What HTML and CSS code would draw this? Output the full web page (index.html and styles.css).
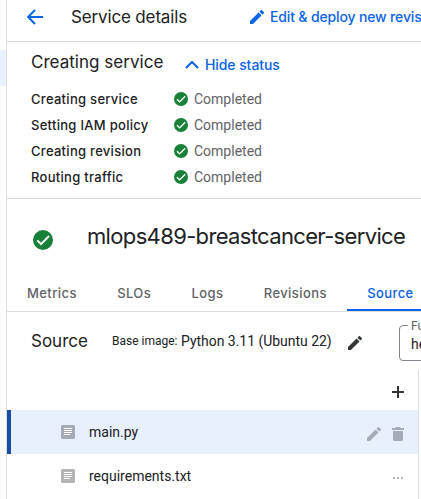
FILE: index.html
```html
<!DOCTYPE html>
<html lang="en">
<head>
<meta charset="utf-8">
<title>Service details</title>
<link rel="stylesheet" href="styles.css">
</head>
<body>
<svg class="defs" aria-hidden="true">
  <symbol id="pencil" viewBox="3 3 18 18"><path d="M3 17.25V21h3.75L17.81 9.94l-3.75-3.75L3 17.25zM20.71 7.04a1 1 0 0 0 0-1.41l-2.34-2.34a1 1 0 0 0-1.41 0l-1.83 1.83 3.75 3.75 1.83-1.83z"/></symbol>
  <symbol id="check" viewBox="0 0 20 20"><circle cx="10" cy="10" r="10" fill="#188038"/><path d="M4.3 10.4 8 14.1 16 6" fill="none" stroke="#fff" stroke-width="2"/></symbol>
  <symbol id="file" viewBox="0 0 14 14"><rect width="14" height="14" rx="1.5"/><path d="M3 3.5h8M3 5.5h8M3 7.5h8M3 9.5h6" stroke="#fff" stroke-width="1"/></symbol>
</svg>
<div class="app">
  <nav class="rail"><div class="rail-active"></div></nav>
  <main class="main">
    <header class="header">
      <svg class="back" viewBox="0 0 16 16"><path d="M16 8H1.5M8 1 1.2 8 8 15" fill="none" stroke="#0b63e5" stroke-width="2"/></svg>
      <h1 class="page-title">Service details</h1>
      <a class="edit"><svg class="edit-icon"><use href="#pencil"/></svg><span class="edit-label">Edit &amp; deploy new revision</span></a>
    </header>
    <section class="status">
      <div class="status-head">
        <h2 class="status-title">Creating service</h2>
        <a class="toggle"><svg class="chevron" viewBox="0 0 14 9"><path d="M1 8 7 2l6 6" fill="none" stroke="#0b63e5" stroke-width="2"/></svg><span class="toggle-label">Hide status</span></a>
      </div>
      <div class="step"><span class="step-name">Creating service</span><svg class="step-icon"><use href="#check"/></svg><span class="step-state">Completed</span></div>
      <div class="step"><span class="step-name">Setting IAM policy</span><svg class="step-icon"><use href="#check"/></svg><span class="step-state">Completed</span></div>
      <div class="step"><span class="step-name">Creating revision</span><svg class="step-icon"><use href="#check"/></svg><span class="step-state">Completed</span></div>
      <div class="step"><span class="step-name">Routing traffic</span><svg class="step-icon"><use href="#check"/></svg><span class="step-state">Completed</span></div>
    </section>
    <section class="service">
      <svg class="service-icon"><use href="#check"/></svg>
      <h2 class="service-name">mlops489-breastcancer-service</h2>
    </section>
    <nav class="tabs">
      <a class="tab">Metrics</a><a class="tab">SLOs</a><a class="tab">Logs</a><a class="tab">Revisions</a><a class="tab active">Source</a>
    </nav>
    <section class="source-bar">
      <h3 class="source-title">Source</h3>
      <span class="base">Base image:</span><span class="image">Python 3.11 (Ubuntu 22)</span>
      <svg class="image-edit"><use href="#pencil"/></svg>
      <fieldset class="field"><legend>Function entry point</legend><span class="value">hello_http</span></fieldset>
    </section>
    <section class="files">
      <div class="files-tools"><svg class="plus" viewBox="0 0 12 12"><path d="M6 0v12M0 6h12" stroke="#323639" stroke-width="2"/></svg></div>
      <div class="file selected"><svg class="file-icon"><use href="#file"/></svg><span class="file-name">main.py</span>
        <svg class="file-edit"><use href="#pencil"/></svg>
        <svg class="trash" viewBox="0 0 12 14"><path d="M0 1h3.5l.7-1h3.6l.7 1H12v2H0zM1 4h10v8.5A1.5 1.5 0 0 1 9.500 14h-7A1.500 1.500 0 0 1 1 12.500z"/></svg></div>
      <div class="file"><svg class="file-icon"><use href="#file"/></svg><span class="file-name">requirements.txt</span>
        <svg class="more" viewBox="0 0 10 2"><path d="M0 0h2v2H0zM4 0h2v2H4zM8 0h2v2H8z"/></svg></div>
    </section>
  </main>
</div>
</body>
</html>
```
FILE: styles.css
```css
* { box-sizing: border-box; }
body { margin: 0; overflow: hidden; background: #fff; color: #202124; font-family: Roboto, sans-serif; font-size: 14px; }
h1, h2, h3 { margin: 0; font-weight: 400; }
svg { display: block; flex: none; }
span, a, h1, h2, h3 { flex: none; white-space: nowrap; }
.defs { display: none; }
.app { display: flex; width: 421px; height: 499px; overflow: hidden; }
.rail { flex: none; width: 7px; border-right: 1px solid #dadce0; padding-top: 50px; }
.rail-active { height: 36px; background: #e8f0fe; }
.main { flex: 1; min-width: 0; overflow: hidden; }
.page-title, .status-title, .service-name, .source-title, .edit, .toggle, .step-name, .tab { font-family: Inter, sans-serif; }

.header { display: flex; align-items: center; height: 42px; padding: 0 0 8px 20px; border-bottom: 1px solid #dadce0; }
.back { width: 16px; height: 16px; }
.page-title { width: 179px; margin-left: 28px; font-size: 17px; letter-spacing: -.15px; }
.edit, .toggle { display: flex; align-items: center; color: #0b63e5; font-size: 14px; font-weight: 500; }
.edit-icon { width: 14px; height: 14px; fill: #0b63e5; }
.edit-label { margin-left: 6px; letter-spacing: -.15px; }

.status { height: 157px; padding-left: 24px; border-bottom: 1px solid #dadce0; }
.status-head { display: flex; align-items: center; height: 44px; padding-bottom: 4px; }
.status-title { width: 154px; font-size: 17px; letter-spacing: .03px; }
.toggle { padding-top: 4px; }
.chevron { width: 14px; height: 9px; }
.toggle-label { margin-left: 6px; letter-spacing: -.08px; }
.step { display: flex; align-items: center; height: 26px; }
.step-name { width: 143px; font-size: 13px; font-weight: 500; letter-spacing: .29px; }
.step-icon { width: 14px; height: 14px; }
.step-state { margin-left: 6px; color: #5f6368; }

.service { display: flex; align-items: center; height: 77px; padding-left: 26px; }
.service-icon { width: 20px; height: 20px; margin-top: 5px; }
.service-name { margin: -3px 0 0 34px; font-size: 22px; letter-spacing: -.65px; }

.tabs { display: flex; height: 36px; border-bottom: 1px solid #dadce0; }
.tab { flex: none; padding: 9px 20.3px 0 20px; height: 35px; color: #5f6368; font-size: 13px; font-weight: 500; letter-spacing: .42px; }
.tab.active { color: #0b63e5; border-bottom: 2px solid #0b63e5; width: 92px; }

.source-bar { display: flex; align-items: center; height: 58px; padding-left: 24px; }
.source-title { width: 81px; font-size: 17px; }
.base { width: 69px; font-size: 12px; }
.image { width: 167px; letter-spacing: -.03px; }
.image-edit { width: 14px; height: 14px; fill: #323639; margin-top: 4px; }
.field { flex: none; width: 180px; height: 42px; margin: -3px 0 0 37px; padding: 0 0 0 8px; border: 1px solid #80868b; border-radius: 4px; }
.field legend { padding: 0 4px 0 3px; color: #5f6368; font-size: 12px; line-height: 14px; }
.value { display: block; padding-left: 3px; line-height: 22px; }

.files { width: 412px; height: 129px; border-right: 1px solid #dadce0; }
.files-tools { display: flex; justify-content: flex-end; height: 40px; padding: 16px 14px 0 0; }
.plus { width: 12px; height: 12px; }
.file { display: flex; align-items: center; height: 44px; padding: 0 14px 0 54px; fill: #b3b3b5; }
.selected { border-left: 4px solid #174ea6; padding-left: 50px; background: #e8f0fe; fill: #a5abb6; }
.file-icon { width: 14px; height: 14px; }
.file-name { flex: 1; margin-left: 14px; }
.file-edit { width: 14px; height: 14px; margin: 4px 11px 0 0; }
.trash { width: 12px; height: 14px; margin-top: 4px; }
.more { width: 10px; height: 2px; margin: 4px 1px 0 0; }
```
